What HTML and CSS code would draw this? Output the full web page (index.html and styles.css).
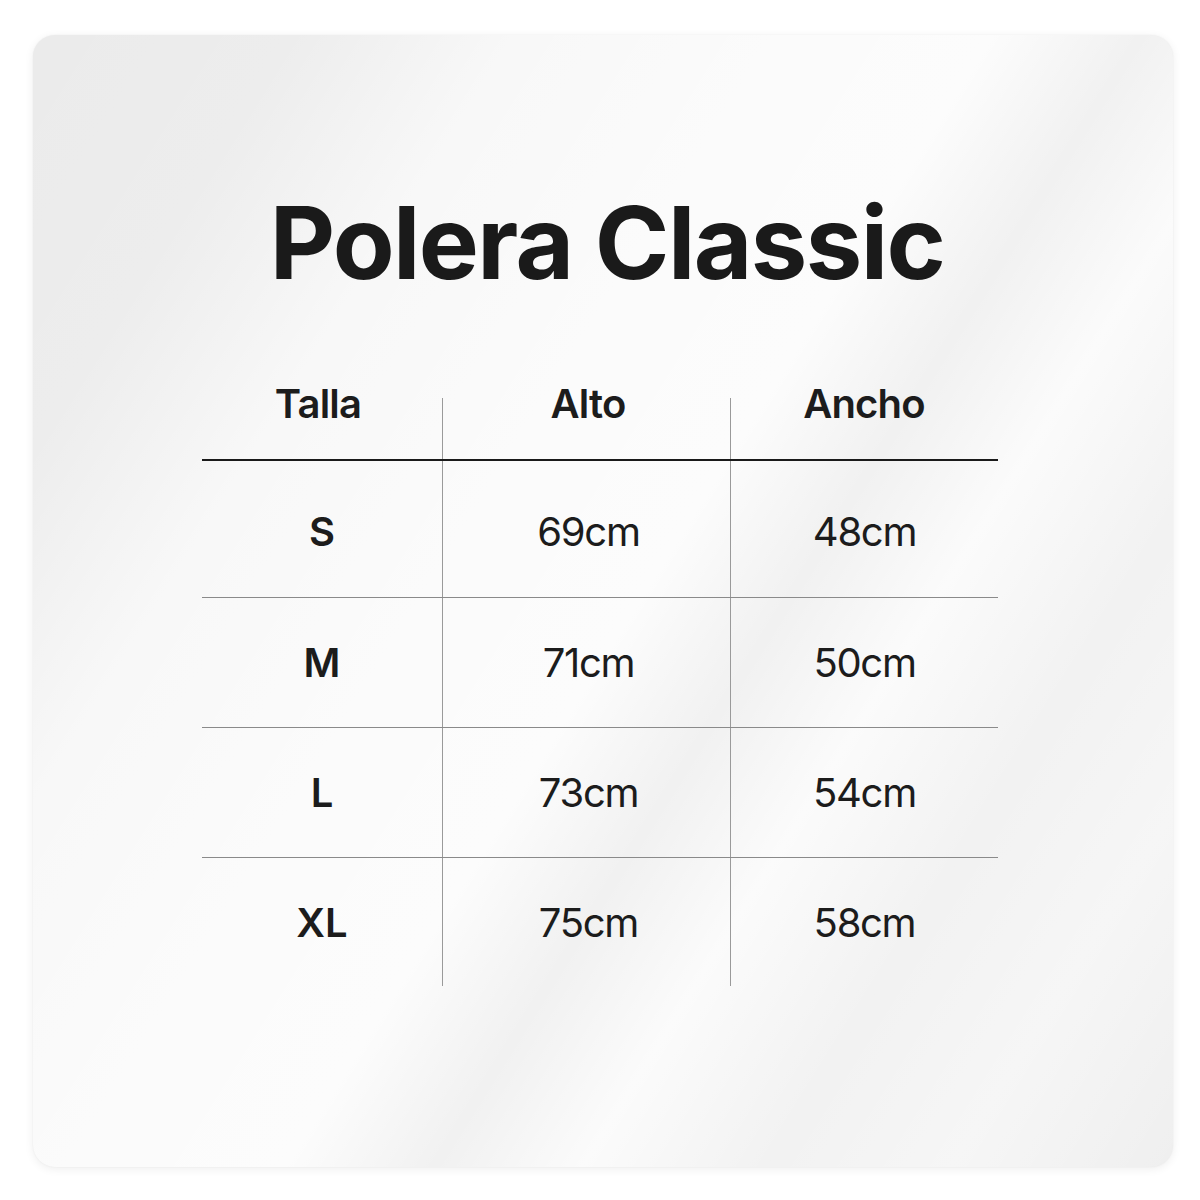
FILE: index.html
```html
<!DOCTYPE html>
<html lang="es">
<head>
<meta charset="utf-8">
<title>Polera Classic</title>
<link rel="stylesheet" href="styles.css">
</head>
<body>
<main class="page">
  <section class="card">
    <h1 class="title">Polera Classic</h1>
    <div class="size-table">
      <div class="row head">
        <div class="cell">Talla</div>
        <div class="cell">Alto</div>
        <div class="cell">Ancho</div>
      </div>
      <div class="row first">
        <div class="cell label">S</div>
        <div class="cell">69cm</div>
        <div class="cell">48cm</div>
      </div>
      <div class="row">
        <div class="cell label">M</div>
        <div class="cell">71cm</div>
        <div class="cell">50cm</div>
      </div>
      <div class="row">
        <div class="cell label">L</div>
        <div class="cell">73cm</div>
        <div class="cell">54cm</div>
      </div>
      <div class="row last">
        <div class="cell label">XL</div>
        <div class="cell">75cm</div>
        <div class="cell">58cm</div>
      </div>
    </div>
  </section>
</main>
</body>
</html>
```
FILE: styles.css
```css
html, body {
  margin: 0;
  padding: 0;
  background: #ffffff;
}

body {
  font-family: Inter, "Noto Sans", "Liberation Sans", sans-serif;
  color: #1c1c1c;
}

.page {
  width: 1200px;
  height: 1200px;
  box-sizing: border-box;
  padding: 35px 27px 33px 33px;
}

.card {
  height: 100%;
  box-sizing: border-box;
  border-radius: 22px;
  padding-top: 156px;
  padding-left: 169px;
  background:
    linear-gradient(122deg,
      rgba(255,255,255,0) 0%,
      rgba(255,255,255,0.1) 14%,
      rgba(255,255,255,0.65) 26%,
      rgba(255,255,255,0.8) 40%,
      rgba(255,255,255,0.85) 52%,
      rgba(255,255,255,0.3) 60%,
      rgba(255,255,255,0.8) 68%,
      rgba(255,255,255,0.35) 78%,
      rgba(255,255,255,0.55) 88%,
      rgba(255,255,255,0.2) 100%),
    #ebebeb;
  box-shadow: 0 2px 10px rgba(0,0,0,0.07), 0 0 2px rgba(0,0,0,0.05);
}

.title {
  margin: 0 0 89px 0;
  width: 796px;
  padding-left: 14px;
  box-sizing: border-box;
  text-align: center;
  font-size: 101px;
  line-height: 103px;
  font-weight: 700;
  letter-spacing: -1.6px;
  color: #1a1a1a;
}

.size-table {
  width: 796px;
  display: flex;
  flex-direction: column;
}

.row {
  display: grid;
  grid-template-columns: 240px 288px 268px;
  border-bottom: 1px solid #8a8a8a;
  height: 130px;
  box-sizing: border-box;
}

.row.head {
  height: 78px;
  border-bottom: 2px solid #1a1a1a;
}

.row.first { height: 137px; }
.row.first .cell { padding-top: 5px; }

.row.last {
  border-bottom: none;
  height: 128px;
}

.cell {
  display: flex;
  align-items: center;
  justify-content: center;
  font-size: 40px;
  line-height: 41px;
  font-weight: 400;
  letter-spacing: -1.3px;
}

.cell + .cell {
  border-left: 1px solid #9a9a9a;
}

.head .cell {
  align-items: flex-start;
  font-weight: 600;
  font-size: 40px;
  letter-spacing: -0.8px;
  border-left: none;
}

.head .cell + .cell {
  background: linear-gradient(#9a9a9a, #9a9a9a) left 15px / 1px 100% no-repeat;
}

.cell.label {
  font-weight: 600;
  letter-spacing: 0;
}

.head .cell:first-child { padding-right: 8px; }
.cell:nth-child(2) { padding-left: 4px; }
```
